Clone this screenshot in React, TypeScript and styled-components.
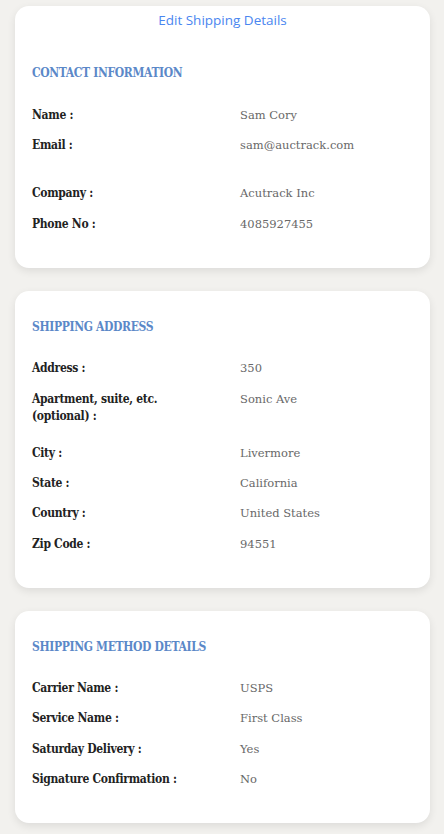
import styled, { createGlobalStyle } from "styled-components";

const GlobalStyle = createGlobalStyle`
  html, body {
    margin: 0;
    padding: 0;
    background: #f2f1ee;
  }
  body {
    font-family: "DejaVu Serif", "Liberation Serif", serif;
  }
`;

const Page = styled.div`
  padding: 6px 14px 10px 15px;
  display: flex;
  flex-direction: column;
  gap: 22.5px;
`;

const Card = styled.div<{ $top?: number }>`
  background: #fff;
  border-radius: 14px;
  box-shadow: 0 3px 8px rgba(0, 0, 0, 0.09);
  padding: ${(p) => p.$top ?? 26}px 17px 35.5px 17px;
`;

const EditLink = styled.a`
  display: block;
  text-align: center;
  font-family: "Open Sans", "Liberation Sans", sans-serif;
  font-size: 13.5px;
  color: #4a86f0;
  text-decoration: none;
  margin-top: -20px;
  margin-bottom: 29px;
  line-height: 28px;
`;

const Heading = styled.h3`
  margin: 0 0 23.5px 0;
  font-size: 12px;
  font-weight: bold;
  font-stretch: condensed;
  letter-spacing: -0.35px;
  color: #5b88c8;
  line-height: 20px;
`;

const Row = styled.div<{ $extra?: number }>`
  display: grid;
  grid-template-columns: 208px 1fr;
  line-height: 17px;
  margin-bottom: ${(p) => 13.3 + (p.$extra ?? 0)}px;
  &:last-child {
    margin-bottom: 0;
  }
`;

const Label = styled.div`
  font-size: 12px;
  font-weight: bold;
  font-stretch: condensed;
  letter-spacing: -0.3px;
  color: #222;
  padding-right: 40px;
`;

const Value = styled.div`
  font-size: 11.5px;
  color: #686868;
`;

type Item = { label: string; value: string; extra?: number };

const contact: Item[] = [
  { label: "Name :", value: "Sam Cory" },
  { label: "Email :", value: "sam@auctrack.com", extra: 18.4 },
  { label: "Company :", value: "Acutrack Inc" },
  { label: "Phone No :", value: "4085927455" },
];

const address: Item[] = [
  { label: "Address :", value: "350" },
  { label: "Apartment, suite, etc. (optional) :", value: "Sonic Ave", extra: 6.8 },
  { label: "City :", value: "Livermore" },
  { label: "State :", value: "California" },
  { label: "Country :", value: "United States" },
  { label: "Zip Code :", value: "94551" },
];

const method: Item[] = [
  { label: "Carrier Name :", value: "USPS" },
  { label: "Service Name :", value: "First Class" },
  { label: "Saturday Delivery :", value: "Yes" },
  { label: "Signature Confirmation :", value: "No" },
];

const Rows = ({ items }: { items: Item[] }) => (
  <div>
    {items.map((it) => (
      <Row key={it.label} $extra={it.extra}>
        <Label>{it.label}</Label>
        <Value>{it.value}</Value>
      </Row>
    ))}
  </div>
);

export default function App() {
  return (
    <>
      <GlobalStyle />
      <Page>
        <Card $top={20}>
          <EditLink href="#">Edit Shipping Details</EditLink>
          <Heading>CONTACT INFORMATION</Heading>
          <Rows items={contact} />
        </Card>
        <Card>
          <Heading>SHIPPING ADDRESS</Heading>
          <Rows items={address} />
        </Card>
        <Card>
          <Heading>SHIPPING METHOD DETAILS</Heading>
          <Rows items={method} />
        </Card>
      </Page>
    </>
  );
}
